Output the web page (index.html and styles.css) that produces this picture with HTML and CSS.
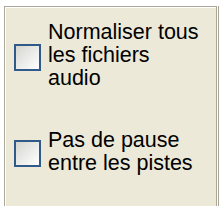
FILE: index.html
```html
<!DOCTYPE html>
<html lang="fr">
<head>
    <meta charset="UTF-8">
    <title>Options audio</title>
    <link rel="stylesheet" href="styles.css">
</head>
<body>
    <div class="frame">
        <div class="panel">
            <label class="option">
                <span class="check"></span>
                <span class="option-text">Normaliser tous les fichiers audio</span>
            </label>
            <label class="option">
                <span class="check"></span>
                <span class="option-text">Pas de pause entre les pistes</span>
            </label>
        </div>
    </div>
</body>
</html>
```

FILE: styles.css
```css
body {
    margin: 0;
    background-color: #fff;
    font-family: "Liberation Sans", Arial, sans-serif;
}

.frame {
    margin: 6px 0 0 4px;
    width: 213px;
    height: 200px;
    border-top: 1px solid #aca899;
    border-left: 1px solid #aca899;
    border-right: 1px solid #aca899;
    box-shadow: 1px 0 0 #fff, 2px 0 0 #aca899;
    box-sizing: border-box;
}

.panel {
    height: 100%;
    background-color: #ece9d8;
    border-top: 1px solid #fff;
    border-left: 1px solid #fff;
    padding: 13px 0 0 8px;
    box-sizing: border-box;
}

.option {
    display: flex;
    align-items: center;
    gap: 7px;
    margin-bottom: 39px;
}

.check {
    flex: none;
    width: 27px;
    height: 27px;
    margin-top: 3px;
    border: 2px solid #2f5a8a;
    background: linear-gradient(135deg, #d6d6d0, #fff);
    box-sizing: border-box;
}

.option-text {
    width: 152px;
    font-size: 21.5px;
    line-height: 23px;
    color: #000;
}
```
